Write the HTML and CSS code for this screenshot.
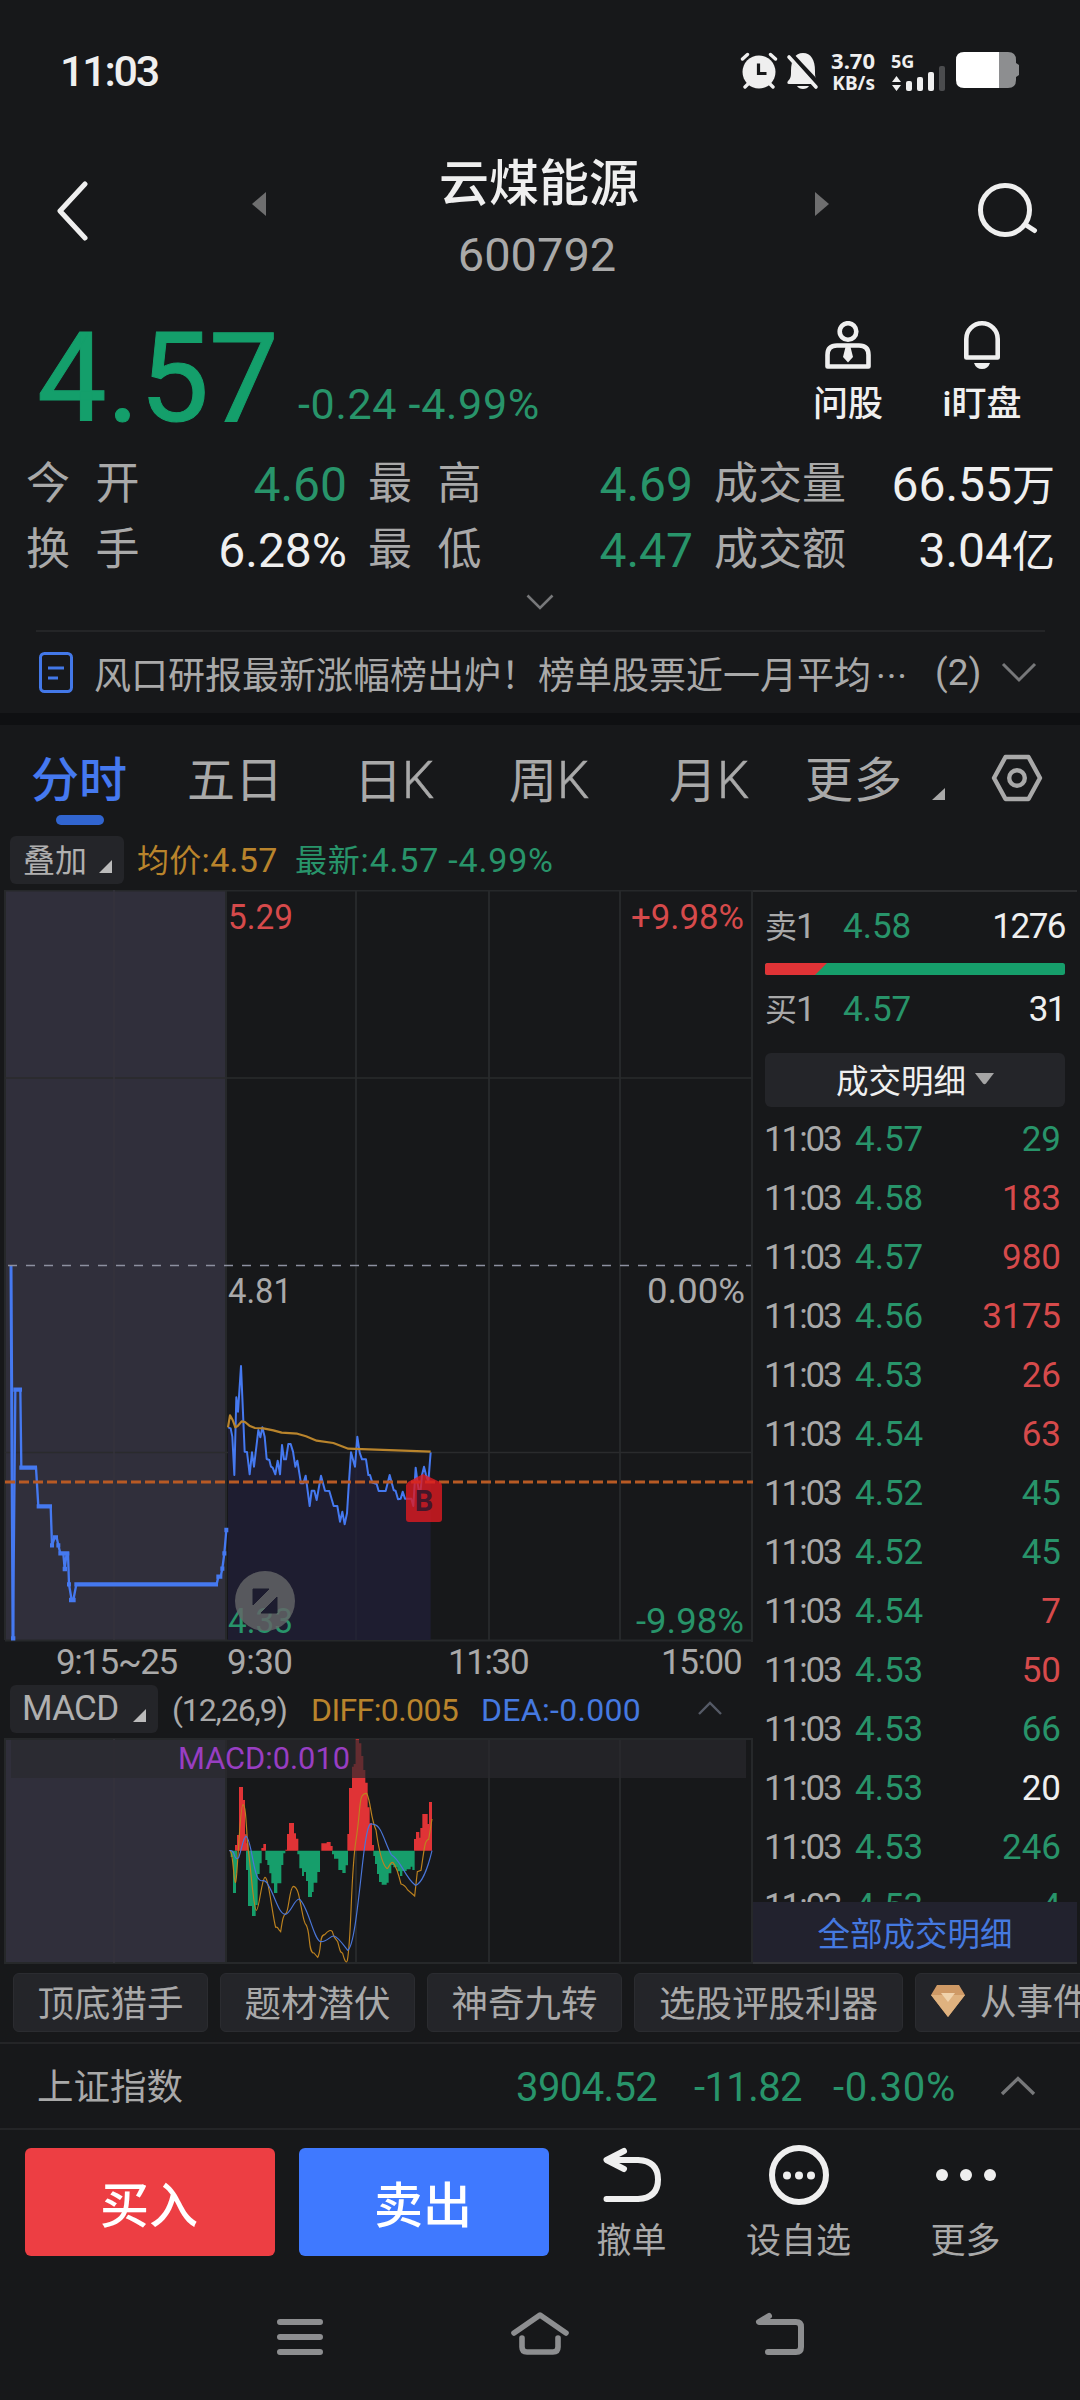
FILE: index.html
```html
<!DOCTYPE html>
<html lang="zh-CN">
<head>
<meta charset="utf-8">
<title>云煤能源 600792</title>
<link rel="stylesheet" href="styles.css">
</head>
<body>
<div class="app">
  <header class="status">
    <span class="clock">11:03</span>
    <div class="status-icons">
      <svg width="38" height="38" viewBox="0 0 38 38"><g stroke="#efefef" stroke-width="3.4" stroke-linecap="round" fill="none"><path d="M2.5 7L7.500 2.500M30.500 2.500L35.500 7M5 35l5-5M33 35l-5-5"/></g><circle cx="19" cy="20" r="16.500" fill="#efefef"/><path d="M18.500 11.500v10h8" fill="none" stroke="#17181a" stroke-width="3.200"/></svg>
      <svg width="34" height="38" viewBox="0 0 34 38"><path d="M3 32c-2 0-2-2-1-3 3-3 3-5 3-10C5 8 9 1 17 1s12 7 12 18c0 5 0 7 3 10 1 1 1 3-1 3z" fill="#efefef"/><path d="M11 34h12c-2 4-10 4-12 0z" fill="#efefef"/><path d="M3 2L33 34" stroke="#17181a" stroke-width="7"/><path d="M3 5L30 35" stroke="#efefef" stroke-width="3.600" stroke-linecap="round"/></svg>
      <div class="speed"><span>3.70</span><span>KB/s</span></div>
      <div class="signal"><span>5G</span>
        <svg width="55" height="26" viewBox="0 0 55 26"><g fill="#efefef"><path d="M1 11L5.500 5 10 11zM1 14L5.500 20 10 14z" transform="translate(0 6)"/><rect x="15" y="16" width="6" height="10" rx="2"/><rect x="26" y="12" width="6" height="14" rx="2"/><rect x="37" y="7" width="6" height="19" rx="2"/></g><rect x="48" y="1" width="6" height="25" rx="2" fill="#4b4c4e"/></svg>
      </div>
      <svg width="63" height="36" viewBox="0 0 63 36"><path d="M43 0h9q8 0 8 8v3l3 2v10l-3 2v3q0 8-8 8h-9z" fill="#8d8e90"/><path d="M43 0H8Q0 0 0 8v20q0 8 8 8h35z" fill="#fff"/></svg>
    </div>
  </header>

  <nav class="titlebar">
    <svg class="back" width="34" height="60" viewBox="0 0 34 60"><path d="M30 3L5 30 30 57" fill="none" stroke="#efefef" stroke-width="5" stroke-linecap="round" stroke-linejoin="round"/></svg>
    <svg class="prev" width="15" height="24" viewBox="0 0 15 24"><path d="M14 0v24L0 12z" fill="#6e6e6f"/></svg>
    <div class="name"><h1>云煤能源</h1><p>600792</p></div>
    <svg class="next" width="15" height="24" viewBox="0 0 15 24"><path d="M0 0v24L14 12z" fill="#6e6e6f"/></svg>
    <svg class="search" width="62" height="56" viewBox="0 0 62 56"><circle cx="28" cy="28" r="24.500" fill="none" stroke="#efefef" stroke-width="5"/><path d="M49 43L57.500 48.500" stroke="#efefef" stroke-width="5" stroke-linecap="round"/></svg>
  </nav>

  <section class="quote">
    <span class="price">4.57</span>
    <span class="change">-0.24 -4.99%</span>
    <div class="action ask"><svg width="46" height="48" viewBox="0 0 46 48"><g fill="none" stroke="#efefef" stroke-width="4.600"><circle cx="23" cy="10.500" r="8.300"/><path d="M2.500 45.500V34Q2.500 24.500 12 24.500H34Q43.500 24.500 43.500 34V45.500Z" stroke-linejoin="round"/></g><path d="M20.500 26h5l2.500 10-5 5.500-5-5.500z" fill="#efefef"/></svg><span>问股</span></div>
    <div class="action watch"><svg width="36" height="48" viewBox="0 0 36 48"><path d="M2.300 36.500V18a15.700 15.700 0 0 1 31.400 0V36.500Z" fill="none" stroke="#efefef" stroke-width="4.600" stroke-linejoin="round"/><path d="M10 42h16q-2 6-8 6t-8-6z" fill="#efefef"/></svg><span>i盯盘</span></div>
  </section>

  <section class="stats">
    <span class="lab wide">今开</span><b class="down">4.60</b><span class="lab wide">最高</span><b class="down">4.69</b><span class="lab">成交量</span><b>66.55<i>万</i></b>
    <span class="lab wide">换手</span><b>6.28%</b><span class="lab wide">最低</span><b class="down">4.47</b><span class="lab">成交额</span><b>3.04<i>亿</i></b>
  </section>
  <div class="expand"><svg width="28" height="16" viewBox="0 0 28 16"><path d="M1.500 1.500L14 14 26.500 1.500" fill="none" stroke="#77787a" stroke-width="2.600"/></svg></div>

  <section class="news">
    <svg width="34" height="42" viewBox="0 0 34 42"><rect x="1.500" y="1.500" width="31" height="38" rx="4" fill="none" stroke="#4378e8" stroke-width="3"/><path d="M9 16h16M9 26h10" stroke="#4378e8" stroke-width="3"/></svg>
    <p>风口研报最新涨幅榜出炉！榜单股票近一月平均<span class="dots">···</span></p>
    <span class="count">(2)</span>
    <svg width="36" height="22" viewBox="0 0 36 22"><path d="M2 2L18 18 34 2" fill="none" stroke="#77787a" stroke-width="3"/></svg>
  </section>

  <nav class="tabs">
    <span class="on">分时</span><span>五日</span><span>日<em>K</em></span><span>周<em>K</em></span><span>月<em>K</em></span><span class="more">更多</span>
    <svg class="corner" width="13" height="12" viewBox="0 0 13 12"><path d="M13 0v12H0z" fill="#aaa"/></svg>
    <svg class="hex" width="52" height="48" viewBox="0 0 52 48"><g fill="none" stroke="#a9a9a9" stroke-width="4.400" stroke-linejoin="round"><path d="M14.500 3H37.500L49 24 37.500 45H14.500L3 24z"/><circle cx="26" cy="24" r="7.800"/></g></svg>
  </nav>

  <div class="legend">
    <span class="btn"><em>叠加</em><svg width="13" height="13" viewBox="0 0 13 13"><path d="M13 0v13H0z" fill="#bbb"/></svg></span>
    <span class="avg">均价<em>:4.57</em></span>
    <span class="last">最新<em>:4.57 -4.99%</em></span>
  </div>

  <main class="board">
    <div class="charts">
      <svg class="pricechart" width="753" height="752" viewBox="0 890 753 752">
        <rect x="5" y="891" width="220" height="749" fill="#302f3b"/>
        <g stroke="#26282a" stroke-width="2" fill="none"><path d="M5 890.500H753M5 1640.500H753M752 890V1642M5 890V1640M226 890V1640M356 890V1640M489 890V1640M620 890V1640"/><path d="M5 1078H751M5 1452.500H751" stroke="#2a2b2d" stroke-width="1.500"/><path d="M114 890V1640" stroke="#34333c" stroke-width="1.500"/></g>
        <g transform="translate(220 1340) scale(.33333)" fill="none">
          <path fill="#1e1d30" d="M24 900V262L32 265 37 290 43 405 49 172 54 215 63 78 74 335 81 336 89 403 96 337 102 380 115 270 121 292 127 262 134 290 140 357 148 360 153 380 158 383 166 403 173 362 180 403 186 315 192 358 198 358 205 312 212 312 219 335 226 380 232 362 243 430 250 430 257 407 269 498 275 452 283 452 290 480 303 407 315 452 328 453 341 498 352 498 360 545 367 515 374 553 381 520 386 440 393 337 405 380 412 290 419 338 426 358 438 358 445 405 450 405 457 428 470 432 476 453 497 453 509 405 521 450 527 453 534 478 542 476 548 455 555 476 574 476 580 498 587 383 593 430 600 472 606 405 612 380 618 405 625 425 632 337V900z"/>
          <path stroke="#222233" stroke-width="6" d="M408 350V900"/>
          <path stroke="#4579f0" stroke-width="6" stroke-linejoin="round" d="M24 262L32 265 37 290 43 405 49 172 54 215 63 78 74 335 81 336 89 403 96 337 102 380 115 270 121 292 127 262 134 290 140 357 148 360 153 380 158 383 166 403 173 362 180 403 186 315 192 358 198 358 205 312 212 312 219 335 226 380 232 362 243 430 250 430 257 407 269 498 275 452 283 452 290 480 303 407 315 452 328 453 341 498 352 498 360 545 367 515 374 553 381 520 386 440 393 337 405 380 412 290 419 338 426 358 438 358 445 405 450 405 457 428 470 432 476 453 497 453 509 405 521 450 527 453 534 478 542 476 548 455 555 476 574 476 580 498 587 383 593 430 600 472 606 405 612 380 618 405 625 425 632 337"/>
          <path stroke="#b9842c" stroke-width="6.500" stroke-linejoin="round" d="M24 262L30 226 38 240 46 262 53 258 65 244 75 246 88 257 105 264 130 265 160 271 185 278 232 281 258 289 290 302 340 309 385 326 632 335"/>
        </g>
        <g transform="translate(0 1240) scale(.33333)" fill="none" stroke="#4579f0">
          <path stroke-width="9" d="M33 76L35 450 39 1195"/>
          <path stroke-width="7" d="M39 1195L46 449 61 449 64 683 108 683 115 799 152 799 156 916 164 892 170 892 175 916 181 940 190 940 194 987 200 940 204 940 207 1033 215 1080 220 1080 229 1033 650 1033 655 1010 662 1010 667 986 673 940 679 870"/>
          <path stroke-width="13" d="M33 1195H46M40 449H66M58 683H111M110 799H156M150 916H162M159 892H174M169 916H181M175 940H208M188 987H201M201 1033H213M207 1080H227M223 1033H654M649 1010H667M661 986H673M667 940H679M673 870H685"/>
        </g>
        <path d="M8 1265.500H751" stroke="#8d90a0" stroke-width="1.300" stroke-dasharray="9 9"/>
        <path d="M5 1482H753" stroke="#b85a24" stroke-width="3" stroke-dasharray="10 4"/>
        <g class="axis">
          <text x="228" y="929" class="up" textLength="65" lengthAdjust="spacingAndGlyphs">5.29</text>
          <text x="631" y="929" class="up" textLength="113" lengthAdjust="spacingAndGlyphs">+9.98%</text>
          <text x="228" y="1303" textLength="64" lengthAdjust="spacingAndGlyphs">4.81</text>
          <text x="647" y="1303" textLength="98" lengthAdjust="spacingAndGlyphs">0.00%</text>
          <text x="228" y="1633" class="dn" textLength="65" lengthAdjust="spacingAndGlyphs">4.33</text>
          <text x="636" y="1633" class="dn" textLength="108" lengthAdjust="spacingAndGlyphs">-9.98%</text>
        </g>
        <path d="M408 1482L423 1474 440 1482Q442 1483 442 1486V1519Q442 1522 439 1522H409Q406 1522 406 1519V1485z" fill="#df1a20" fill-opacity=".8"/>
        <text x="424" y="1511" class="mark">B</text>
        <circle cx="265" cy="1601" r="30" fill="#646568" fill-opacity=".82"/>
        <path d="M253 1589H269L253 1605zM277 1597V1613H261z" fill="#1d1c2f" stroke="#1d1c2f"/>
      </svg>
      <div class="times"><span>9:15~25</span><span>9:30</span><span>11:30</span><span>15:00</span></div>
      <div class="macdbar">
        <span class="btn">MACD<svg width="13" height="13" viewBox="0 0 13 13"><path d="M13 0v13H0z" fill="#bbb"/></svg></span>
        <span class="par">(12,26,9)</span><span class="diff">DIFF:0.005</span><span class="dea">DEA:-0.000</span>
        <svg width="24" height="14" viewBox="0 0 24 14"><path d="M1 13L12 2 23 13" fill="none" stroke="#555a66" stroke-width="2.400"/></svg>
      </div>
      <svg class="macdchart" width="753" height="226" viewBox="0 1738 753 226">
        <rect x="5" y="1739" width="220" height="224" fill="#302f3b"/>
        <path d="M5 1739H753M5 1963H753M752 1738V1964M5 1738V1964M226 1738V1964M356 1738V1964M489 1738V1964M620 1738V1964" stroke="#26282a" stroke-width="2"/>
        <path d="M114 1739V1963" stroke="#34333c" stroke-width="1.500"/>
        <g transform="translate(220 1730) scale(.33333)">
          <path fill="#e03336" d="M45 362V345H51V315H57V171H69V210H75V313H80V340H85V362zM124 362V354H130V342H138V362zM196 362V359H201V312H207V279H222V310H228V326H235V362zM304 362V340H320V336H332V348H338V362zM382 362V312H387V174H396V110H401V102H407V28H417V40H424V78H430V120H436V158H443V232H449V280H456V345H462V362zM582 362V327H588V306H598V323H601V294H607V252H623V282H627V216H636V362z"/>
          <path fill="#169e6b" d="M32 362V381H39V489H48V430H51V362zM78 362V420H84V528H96V558H107V525H113V432H119V400H125V362zM136 362V390H142V405H148V430H154V460H162V489H172V460H184V405H190V370H196V362zM232 362V373H238V415H246V438H252V426H258V453H264V501H276V486H281V458H292V426H300V362zM336 362V373H342V386H355V420H367V429H377V406H384V362zM460 362V378H465V402H471V432H477V456H485V464H500V458H506V430H514V405H520V412H532V424H540V438H547V423H560V418H572V410H577V420H584V362z"/>
          <path fill="none" stroke="#bd821f" stroke-width="3.500" d="M28 362C40 360 40 450 46 457S59 225 69 224 79 320 86 370 101 540 109 541 125 445 135 442 158 560 167 592Q172 590 176 598L182 605C188 565 190 555 198 550S209 470 220 469Q229 470 235 490C247 540 250 580 258 584 272 605 264 670 282 669L293 682C306 660 296 615 314 614Q330 595 337 605L342 620 353 635C362 670 361 665 368 670Q377 705 382 692C395 620 392 430 408 330S414 190 440 190C454 220 451 262 468 300 482 400 495 410 500 415S512 390 520 399 535 430 543 462Q555 465 563 480L584 498 592 425 603 421C614 350 614 330 626 328L636 267"/>
          <path fill="none" stroke="#4a76d9" stroke-width="3.500" d="M28 362Q40 359 44 378 49 390 56 383C66 355 70 320 78 319 91 325 96 390 108 430Q115 454 127 452 137 450 144 464C166 500 176 552 196 553 213 550 223 506 238 507 266 530 282 635 303 635S331 616 342 618 367 640 383 661C406 650 421 440 434 350S453 285 461 283C485 285 494 340 514 374 543 390 553 440 586 466 606 462 625 408 636 362"/>
        </g>
        <rect x="11" y="1740" width="735" height="38" fill="#292a2e" fill-opacity=".68"/>
        <text x="178" y="1769" class="macdv" textLength="172" lengthAdjust="spacingAndGlyphs">MACD:0.010</text>
      </svg>
    </div>

    <aside class="tape">
      <div class="level"><span>卖<em>1</em></span><b>4.58</b><i>1276</i></div>
      <svg width="300" height="12" viewBox="0 0 300 12"><rect width="300" height="12" rx="2.500" fill="#169e6b"/><path d="M2.500 0H62L50 12H2.500Q0 12 0 9.500v-7Q0 0 2.500 0z" fill="#e03336"/></svg>
      <div class="level buy"><span>买<em>1</em></span><b>4.57</b><i>31</i></div>
      <div class="pick">成交明细<svg width="19" height="12" viewBox="0 0 19 12"><path d="M0 0H19L11 10.500Q9.500 12 8 10.500z" fill="#a5a5a5"/></svg></div>
      <div class="trades">
        <div><span>11:03</span><b>4.57</b><i class="g">29</i></div>
        <div><span>11:03</span><b>4.58</b><i class="r">183</i></div>
        <div><span>11:03</span><b>4.57</b><i class="r">980</i></div>
        <div><span>11:03</span><b>4.56</b><i class="r">3175</i></div>
        <div><span>11:03</span><b>4.53</b><i class="r">26</i></div>
        <div><span>11:03</span><b>4.54</b><i class="r">63</i></div>
        <div><span>11:03</span><b>4.52</b><i class="g">45</i></div>
        <div><span>11:03</span><b>4.52</b><i class="g">45</i></div>
        <div><span>11:03</span><b>4.54</b><i class="r">7</i></div>
        <div><span>11:03</span><b>4.53</b><i class="r">50</i></div>
        <div><span>11:03</span><b>4.53</b><i class="g">66</i></div>
        <div><span>11:03</span><b>4.53</b><i>20</i></div>
        <div><span>11:03</span><b>4.53</b><i class="g">246</i></div>
        <div><span>11:03</span><b>4.53</b><i class="g">4</i></div>
      </div>
      <div class="all">全部成交明细</div>
    </aside>
  </main>

  <div class="chips">
    <span>顶底猎手</span><span>题材潜伏</span><span>神奇九转</span><span class="long">选股评股利器</span>
    <span class="gem"><svg width="34" height="32" viewBox="0 0 34 32"><path d="M6 0H28L34 10 17 32 0 10z" fill="#cf9a66"/><path d="M0 10H34L17 32z" fill="#dfb27f"/><path d="M10 8H24L17 17z" fill="#f0d3ac"/></svg>从事件</span>
  </div>

  <div class="index"><span>上证指数</span><b>3904.52</b><b>-11.82</b><b class="pct">-0.30%</b><svg width="36" height="20" viewBox="0 0 36 20"><path d="M2 18L18 2.500 34 18" fill="none" stroke="#77787a" stroke-width="3.400"/></svg></div>

  <footer class="actions">
    <button class="buybtn">买入</button><button class="sellbtn">卖出</button>
    <div class="tool"><svg width="60" height="60" viewBox="0 0 60 60"><path d="M22 6L4.500 15 22 24M6 15H36Q56 16 56 34.500T36 54H4.500" fill="none" stroke="#efefef" stroke-width="6" stroke-linecap="round" stroke-linejoin="round"/></svg><span>撤单</span></div>
    <div class="tool"><svg width="60" height="60" viewBox="0 0 60 60"><circle cx="30" cy="30" r="27" fill="none" stroke="#efefef" stroke-width="6"/><g fill="#efefef"><circle cx="18" cy="30.500" r="4"/><circle cx="30" cy="30.500" r="4"/><circle cx="42" cy="30.500" r="4"/></g></svg><span>设自选</span></div>
    <div class="tool"><svg width="60" height="60" viewBox="0 0 60 60"><g fill="#efefef"><circle cx="6" cy="30" r="6"/><circle cx="30" cy="30" r="6"/><circle cx="54" cy="30" r="6"/></g></svg><span>更多</span></div>
  </footer>

  <nav class="sysnav">
    <svg width="60" height="50" viewBox="0 0 60 50"><path d="M10 13H50M10 28H50M10 43H50" stroke="#8d8e90" stroke-width="6" stroke-linecap="round"/></svg>
    <svg width="60" height="50" viewBox="0 0 60 50"><path d="M4 24L30 6 56 24M12 29V38Q12 43 17 43H43Q48 43 48 38V29" fill="none" stroke="#8d8e90" stroke-width="5.600" stroke-linecap="round" stroke-linejoin="round"/></svg>
    <svg width="60" height="50" viewBox="0 0 60 50"><path d="M19 7L9 13H46Q51 13 51 18V38Q51 43 46 43H18" fill="none" stroke="#8d8e90" stroke-width="6" stroke-linecap="round" stroke-linejoin="round"/></svg>
  </nav>
</div>
</body>
</html>
```
FILE: styles.css
```css
* { box-sizing: border-box; margin: 0; padding: 0; }
body { background: #17181a; color: #efefef; font-family: Roboto, "Noto Sans CJK SC", sans-serif; }
.app { width: 1080px; height: 2400px; overflow: hidden; display: flex; flex-direction: column; }
.app > * { flex: none; }
svg { display: block; flex: none; }
i, em { font-style: normal; }
b { font-weight: 400; }
span, b, i, p, h1 { white-space: nowrap; }

.status { height: 140px; padding: 0 55px 0 60px; display: flex; justify-content: space-between; }
.clock { font-size: 43px; line-height: 142px; font-weight: 500; letter-spacing: -2.2px; }
.status-icons { display: flex; padding-top: 52px; align-items: flex-start; height: 100px; width: 285px; }
.status-icons > svg { margin-right: 8px; }
.status-icons > svg:last-child { margin-right: 0; }
.speed { width: 46px; margin: -3px 16px 0 1px; display: flex; flex-direction: column; align-items: flex-end; font: 700 22px/23px "Noto Sans", sans-serif; }
.speed span:last-child { font-size: 19px; }
.signal { width: 56px; margin-right: 9px; font: 700 18px/18px "Noto Sans", sans-serif; }
.signal svg { margin-top: -5px; }
.signal span { display: block; }

.titlebar { height: 160px; display: grid; grid-template-columns: 252px 180px 214px 183px 1fr; }
.back { margin: 41px 0 0 55px; }
.prev { grid-column: 2; margin-top: 52px; }
.titlebar .next { margin: 52px 0 0 169px; }
.search { margin: 42px 0 0 148px; }
.name { text-align: center; }
.name h1 { font-weight: 500; font-size: 50px; line-height: 60px; margin-top: 14px; }
.name p { font-size: 47px; line-height: 56px; color: #a9a9a9; font-weight: 400; margin: 13px 4px 0 0; }

.quote { height: 150px; display: flex; padding-left: 37px; }
.price { width: 261px; font-size: 124px; line-height: 158px; font-weight: 400; color: #149f6b; -webkit-text-stroke: 1px #149f6b; }
.change { width: 496px; font-size: 43px; line-height: 208px; color: #28946a; letter-spacing: .7px; }
.action { padding-top: 21px; width: 108px; display: flex; flex-direction: column; align-items: center; font-size: 35px; font-weight: 500; }
.action span { line-height: 36px; margin-top: 18px; }
.watch { margin-left: 26px; }

.stats { display: grid; grid-template-columns: 125px 196px 118px 228px 138px 224px; grid-auto-rows: 66px; padding-left: 26px; line-height: 66px; }
.stats b { font-size: 48px; text-align: right; line-height: 70px; justify-self: end; }
.stats b i { font-size: 43px; line-height: 50px; }
.lab { font-size: 44px; line-height: 69px; color: #a9a9a9; }
.wide { letter-spacing: 25.500px; }
.stats > :nth-child(6n+3), .stats > :nth-child(6n+5) { margin-left: 21px; }
.down { color: #28946a; }
.expand { height: 48px; padding: 12px 0 0 526px; }

.news { margin: 0 36px; width: 1009px; height: 83px; border-top: 2px solid #242527; padding: 0 8px 0 3px; display: flex; align-items: center; color: #a9a9a9; }
.news p { font-size: 37px; margin-left: 21px; width: 841px; }
.news .dots { margin-left: 5px; letter-spacing: 1px; }
.count { width: 66px; font-size: 37px; }
.tabs { border-top: 12px solid #0f1012; height: 123px; display: grid; grid-template-columns: 156px 167px 155px 160px 136px 127px 59px 60px; padding: 33px 0 0 31px; color: #a9a9a9; font-size: 48px; line-height: 46px; }
.tabs em { font-weight: 300; font-size: 51px; -webkit-text-stroke: .5px #a9a9a9; }
.tabs .on { color: #4579f0; font-weight: 500; }
.tabs .on::after { content: ""; display: block; width: 48px; height: 10px; border-radius: 5px; background: #3165d0; margin: 11px 0 0 25px; }
.more { letter-spacing: 1px; }
.corner { margin-top: 30px; }
.hex { margin-top: -4px; }

.legend { height: 54px; display: flex; padding-left: 10px; font-size: 32px; line-height: 49px; }
.btn { background: #242529; border-radius: 6px; color: #b0b0b0; display: flex; align-items: center; justify-content: space-between; height: 48px; }
.legend .btn { width: 114px; padding: 0 12px 0 13px; }
.legend .btn em { font-size: 32px; padding-top: 2px; }
.btn svg { margin-top: 12px; }
.legend em { font-size: 34px; }
.avg { color: #b9842c; margin-left: 13px; width: 158px; letter-spacing: .3px; }
.last { color: #28946a; letter-spacing: .8px; }

.board { height: 1074px; display: flex; }
.charts { width: 753px; }
.axis text { font-size: 35px; fill: #a9a9a9; }
.axis .up { fill: #d64a4b; }
.axis .dn { fill: #28946a; }
.mark { font: 700 29px Roboto, sans-serif; fill: #43172a; text-anchor: middle; }
.times { height: 43px; display: grid; grid-template-columns: 171px 221px 213px 1fr; padding-left: 56px; font-size: 35px; line-height: 41px; color: #a9a9a9; letter-spacing: -1.4px; }
.times span:nth-child(2) { letter-spacing: -.5px; }
.macdbar { height: 53px; display: flex; padding-left: 10px; font-size: 32px; line-height: 50px; }
.macdbar .btn { width: 148px; padding: 0 12px 0 12px; font-size: 35px; line-height: 52px; letter-spacing: -.7px; }
.par { width: 139px; margin-left: 14px; color: #a9a9a9; letter-spacing: -1.1px; }
.diff { width: 170px; color: #b9842c; letter-spacing: -.6px; }
.dea { width: 217px; color: #4579e0; letter-spacing: .3px; }
.macdbar > svg { margin-top: 16px; }
.macdv { font-size: 32px; fill: #983ec2; }

.tape { width: 324px; border-top: 2px solid #2c2d2f; border-bottom: 2px solid #333438; padding-left: 12px; display: flex; flex-direction: column; height: 1074px; font-size: 35px; }
.level { width: 300px; height: 71px; display: grid; grid-template-columns: 78px 1fr auto; line-height: 70px; }
.level span { font-size: 32px; color: #a9a9a9; }
.level em { font-size: 35px; margin-left: -1px; }
.level b, .trades b { color: #28946a; }
.level i { letter-spacing: -1.500px; }
.level.buy { height: 78px; }
.pick { width: 300px; height: 54px; border-radius: 6px; background: #242529; font-size: 32.5px; display: flex; align-items: center; padding-left: 71px; gap: 9px; line-height: 54px; padding-top: 3px; }
.pick svg { margin-top: -5px; }
.trades { height: 795px; width: 296px; padding-top: 3px; overflow: hidden; }
.trades div { height: 59px; line-height: 59px; display: grid; grid-template-columns: 90px 1fr auto; }
.trades span { color: #a9a9a9; letter-spacing: -2.1px; margin-left: -1px; }
.g { color: #28946a; }
.r { color: #d64a4b; }
.all { width: 324px; margin-left: -12px; height: 60px; line-height: 66px; background: #22222e; color: #4579e0; font-size: 32.5px; text-align: center; }

.chips { height: 78px; padding: 9px 0 0 13px; display: flex; gap: 12px; font-size: 36.5px; color: #a9a9a9; }
.chips span { flex: none; width: 195px; height: 59px; line-height: 61px; text-align: center; background: #242529; border: 1px solid #2b2c30; border-radius: 6px; }
.chips .long { width: 269px; }
.chips .gem { width: 190px; display: flex; align-items: center; gap: 15px; padding-left: 15px; }
.gem svg { margin-top: -3px; }
.index { height: 88px; border-top: 2px solid #242527; border-bottom: 2px solid #242527; display: grid; grid-template-columns: 479px 178px 139px 167px 36px; padding-left: 37px; align-items: center; font-size: 36.500px; line-height: 88px; color: #a9a9a9; }
.index b { color: #28946a; font-size: 40px; letter-spacing: -.6px; }
.index .pct { letter-spacing: .8px; }
.index svg { margin-bottom: 5px; }

.actions { height: 150px; display: flex; padding: 18px 0 0 25px; }
.actions button { width: 250px; height: 108px; border: 0; border-radius: 6px; color: #fff; background: #ed3e43; font: 500 49px/108px "Noto Sans CJK SC", sans-serif; margin-right: 24px; padding: 0 2px 2px 0; }
.actions .sellbtn { background: #3f79ff; margin-right: 0; }
.tool { width: 167px; margin: -3px 1px 0 -1px; display: flex; flex-direction: column; align-items: center; color: #a9a9a9; font-size: 35px; }
.tool span { line-height: 40px; margin-top: 17px; }
.sysnav { height: 120px; display: flex; justify-content: center; gap: 180px; padding-top: 29px; }
```
